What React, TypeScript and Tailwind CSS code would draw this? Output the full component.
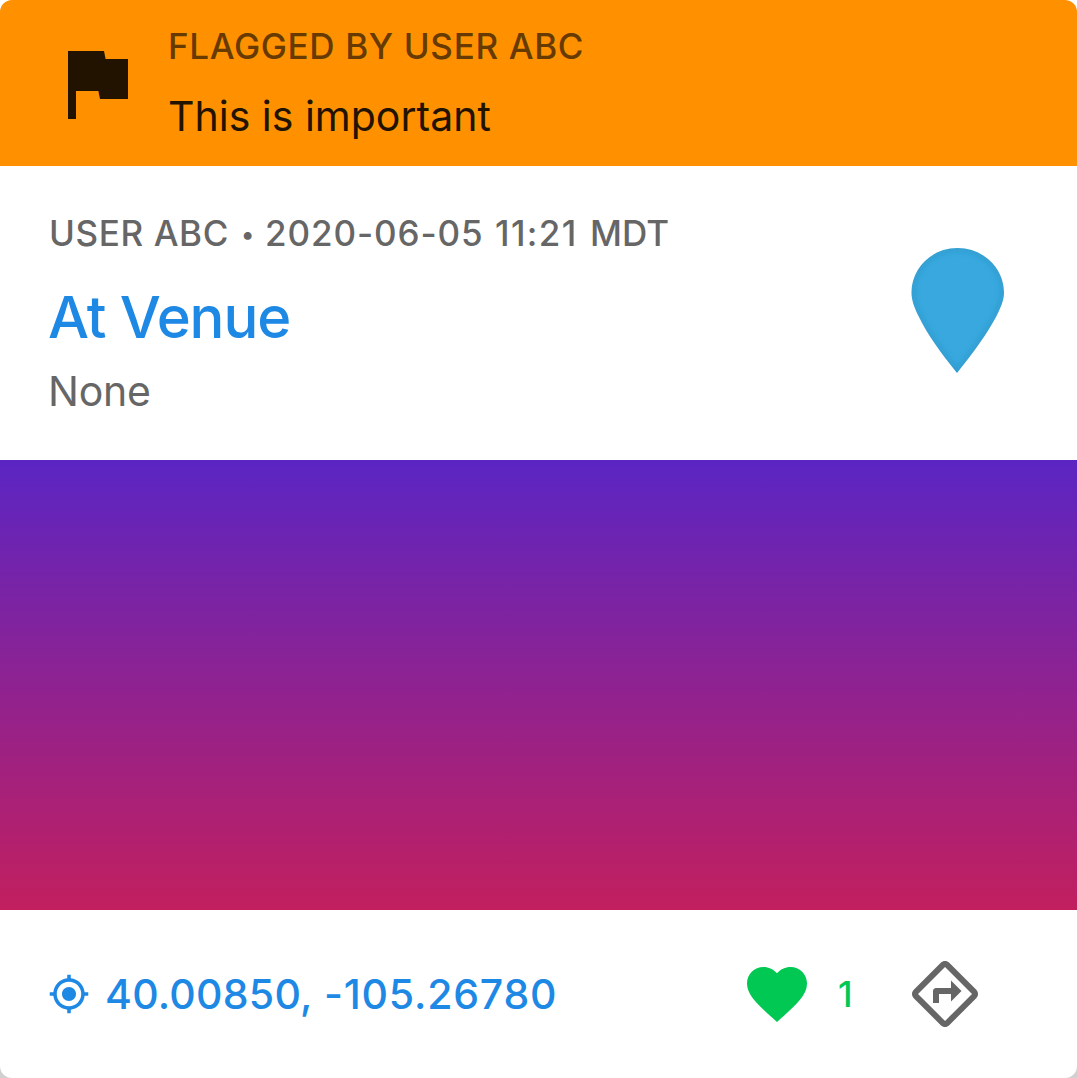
export default function App() {
  return (
    <div className="h-[1078px] w-[1077px] overflow-hidden bg-linear-to-b from-white to-[#d0d0d0] font-['Inter',sans-serif]">
      <div className="flex h-full flex-col overflow-hidden rounded-[12px] bg-white">
        <header className="flex h-[166px] shrink-0 items-start bg-[#ff9100]">
          <svg className="ml-[48px] mt-[35px] size-24 shrink-0" viewBox="0 0 24 24" fill="#221300">
            <path d="M14.4 6 14 4H5v17h2v-7h5.6l.4 2h7V6z" />
          </svg>
          <div className="ml-[24px] mt-[24px] whitespace-nowrap">
            <p className="text-[35px] font-[450] leading-[44px] tracking-[0.65px] text-[#663a00]">FLAGGED BY USER ABC</p>
            <p className="mt-[23px] text-[41px] leading-[50px] text-[#221300]">This is important</p>
          </div>
        </header>
        <section className="flex h-[294px] shrink-0 items-start justify-between pl-[48px]">
          <div className="mt-[45px] whitespace-nowrap">
            <p className="flex h-[44px] items-center text-[35px] font-[450] leading-[44px] text-[#666]">
              <span className="w-[193px] pl-px tracking-[0.6px]">USER ABC</span>
              <span className="w-[24px] pt-0.5 text-[25px]">•</span>
              <span className="w-[230px] tracking-[0.9px]">2020-06-05</span>
              <span className="w-[95px] tracking-[1.4px]">11:21</span>
              <span>MDT</span>
            </p>
            <h1 className="mt-[26px] text-[58px] font-medium leading-[72px] tracking-[-1.1px] text-[#1e88e5]">At Venue</h1>
            <p className="mt-[13px] text-[41px] leading-[50px] tracking-[-0.2px] text-[#666]">None</p>
          </div>
          <svg className="mr-[72px] mt-[81px] h-[128px] w-[94px]" viewBox="0 0 94 128">
            <defs>
              <clipPath id="pin-shape">
                <path d="M46 126C30 106 16 87 7.500 69C3 60 .5 53 .5 45.500C.5 21 21 1 46.500 1S93 21 93 45.500C93 53 90 60 85.500 69C76 87 62 106 46 126Z" />
              </clipPath>
              <filter id="soften">
                <feGaussianBlur stdDeviation="3" />
              </filter>
            </defs>
            <g clipPath="url(#pin-shape)">
              <rect width="94" height="128" fill="#38a8de" />
              <path d="M46 126C30 106 16 87 7.500 69C3 60 .5 53 .5 45.500C.5 21 21 1 46.500 1S93 21 93 45.500C93 53 90 60 85.500 69C76 87 62 106 46 126Z" fill="none" stroke="#247ca8" strokeOpacity=".5" strokeWidth="3" filter="url(#soften)" />
            </g>
          </svg>
        </section>
        <div className="h-[450px] shrink-0 bg-linear-to-b/srgb from-[#5b25c3] to-[#c21f5e]" />
        <footer className="flex h-[168px] shrink-0 items-center justify-between pl-[48px] pr-[96px]">
          <div className="flex items-center text-[41px] font-medium text-[#1e88e5]">
            <svg className="size-[42px] shrink-0" viewBox="0 0 24 24" fill="#1e88e5">
              <path d="M12 8c-2.210 0-4 1.790-4 4s1.790 4 4 4 4-1.790 4-4-1.790-4-4-4zm8.940 3c-.46-4.170-3.770-7.480-7.940-7.940V1h-2v2.060C6.830 3.520 3.520 6.830 3.060 11H1v2h2.060c.46 4.170 3.770 7.480 7.940 7.940V23h2v-2.060c4.170-.46 7.480-3.770 7.940-7.940H23v-2h-2.060zM12 19c-3.870 0-7-3.130-7-7s3.130-7 7-7 7 3.130 7 7-3.130 7-7 7z" />
            </svg>
            <span className="ml-[15px] w-[219px] pt-0.5 tracking-[0.25px]">40.00850,</span>
            <span className="pt-0.5 tracking-[0.8px]">-105.26780</span>
          </div>
          <div className="flex items-center">
            <svg className="size-[72px]" viewBox="0 0 24 24" fill="#00c853">
              <path d="m12 21.350-1.450-1.320C5.400 15.360 2 12.280 2 8.500 2 5.420 4.420 3 7.500 3c1.740 0 3.410.81 4.500 2.090C13.090 3.810 14.760 3 16.500 3 19.580 3 22 5.420 22 8.500c0 3.780-3.400 6.860-8.550 11.540L12 21.350z" />
            </svg>
            <span className="ml-[25px] w-[71px] text-[35px] font-medium leading-[44px] text-[#00c853]">1</span>
            <svg className="size-[72px]" viewBox="0 0 24 24" fill="#666">
              <path d="m22.430 10.590-9.010-9.010c-.75-.75-2.070-.76-2.830 0l-9 9c-.78.78-.78 2.040 0 2.820l9 9c.39.39.9.58 1.410.58.51 0 1.020-.19 1.410-.58l8.990-8.990c.79-.76.8-2.020.03-2.820zm-10.420 10.400-9-9 9-9 9 9-9 9zM8 11v4h2v-3h4v2.500l3.500-3.500L14 7.500V10H9c-.55 0-1 .45-1 1z" />
            </svg>
          </div>
        </footer>
      </div>
    </div>
  );
}
